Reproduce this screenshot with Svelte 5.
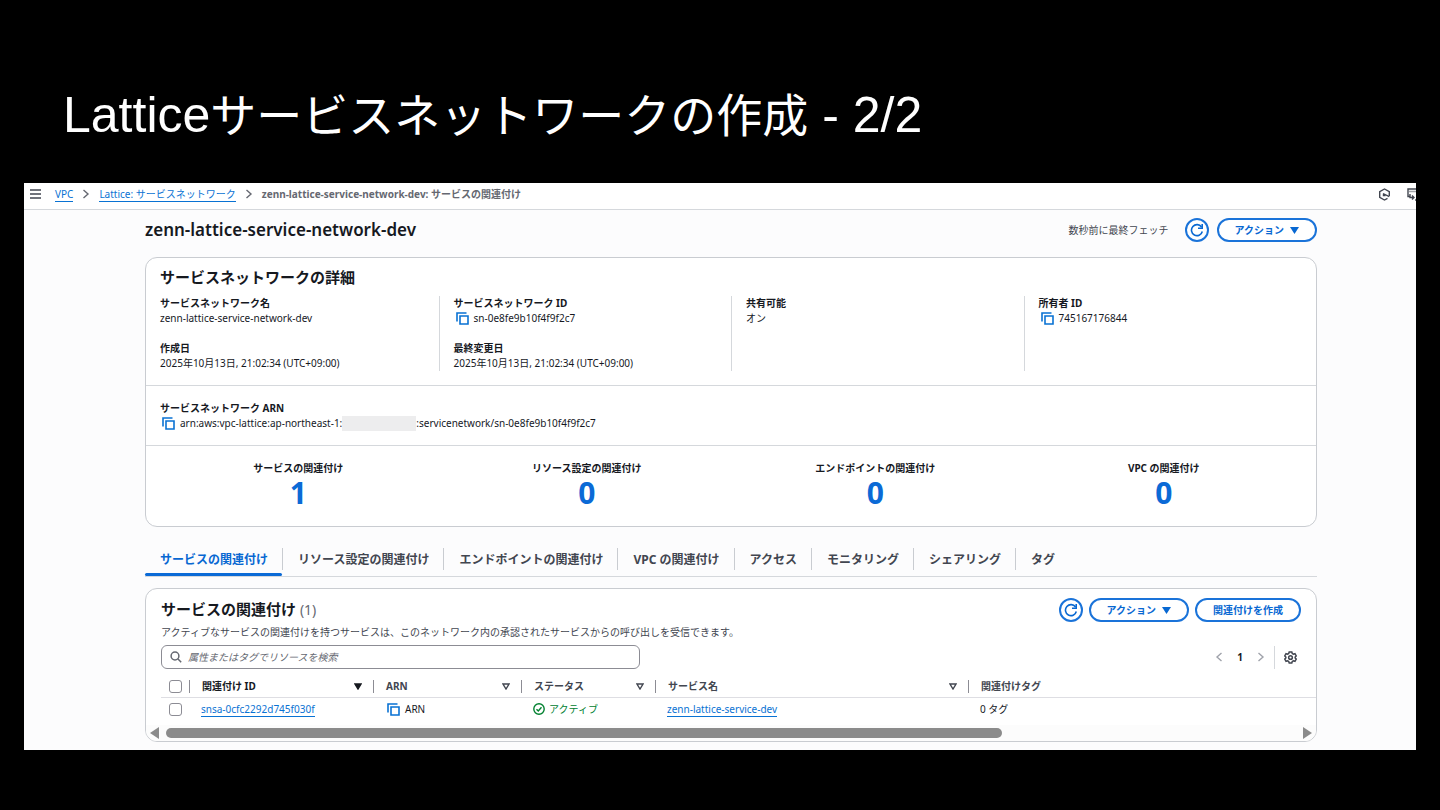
<script>
	const crumbs = [
		{ label: 'VPC', href: '#vpc' },
		{ label: 'Lattice: サービスネットワーク', href: '#lattice' }
	];

	const details = [
		[
			{ label: 'サービスネットワーク名', value: 'zenn-lattice-service-network-dev' },
			{ label: '作成日', value: '2025年10月13日, 21:02:34 (UTC+09:00)' }
		],
		[
			{ label: 'サービスネットワーク ID', value: 'sn-0e8fe9b10f4f9f2c7', copy: true },
			{ label: '最終変更日', value: '2025年10月13日, 21:02:34 (UTC+09:00)' }
		],
		[{ label: '共有可能', value: 'オン' }],
		[{ label: '所有者 ID', value: '745167176844', copy: true }]
	];

	const stats = [
		{ label: 'サービスの関連付け', count: 1 },
		{ label: 'リソース設定の関連付け', count: 0 },
		{ label: 'エンドポイントの関連付け', count: 0 },
		{ label: 'VPC の関連付け', count: 0 }
	];

	const tabs = [
		'サービスの関連付け',
		'リソース設定の関連付け',
		'エンドポイントの関連付け',
		'VPC の関連付け',
		'アクセス',
		'モニタリング',
		'シェアリング',
		'タグ'
	];

	const columns = ['関連付け ID', 'ARN', 'ステータス', 'サービス名', '関連付けタグ'];

	let activeTab = $state(0);
	let sorted = $state(0);
	let query = $state('');
	let selected = $state(false);
</script>

{#snippet copyIcon()}
	<svg class="copy" viewBox="0 0 13 13" width="13" height="13" aria-hidden="true">
		<path d="M1 9.5V1h9.5" />
		<path d="M4 4h8v8H4z" />
	</svg>
{/snippet}

{#snippet refreshButton()}
	<button class="round" aria-label="更新">
		<svg viewBox="0 0 14 14" width="14" height="14" aria-hidden="true">
			<path d="M12.3 8.5A5.5 5.5 0 1 1 11.5 4" />
			<path d="M12.2 1v4.2H8" />
		</svg>
	</button>
{/snippet}

{#snippet chevron(dir)}
	<svg class="chevron" viewBox="0 0 8 10" width="8" height="10" aria-hidden="true">
		<path d={dir === 'left' ? 'M6.5 1L2 5l4.5 4' : 'M1.5 1L6 5l-4.5 4'} />
	</svg>
{/snippet}

{#snippet actionButton()}
	<button class="pill">
		アクション
		<svg viewBox="0 0 9 8" width="9" height="8" aria-hidden="true"><path d="M0 1h9L4.5 8z" /></svg>
	</button>
{/snippet}

<main class="slide">
	<h1>Lattice<span>サービスネットワークの作成</span> - 2/2</h1>

	<div class="console">
		<header class="topbar">
			<button class="plain menu" aria-label="メニュー">
				<svg viewBox="0 0 11 10" width="11" height="10"><path d="M0 1h11M0 5h11M0 9h11" /></svg>
			</button>
			<nav class="crumbs">
				{#each crumbs as crumb}
					<a href={crumb.href}>{crumb.label}</a>
					{@render chevron('right')}
				{/each}
				<b>zenn-lattice-service-network-dev: サービスの関連付け</b>
			</nav>
			<div class="tools">
				<button class="plain" aria-label="CloudShell">
					<svg viewBox="0 0 13 13" width="13" height="13">
						<path d="M11.3 8V3.7L6.5 1 1.7 3.7v5.6L6.5 12l3-1.7" />
						<path d="M5 5.5l6.3 3.2M5.5 6v1.5h2" />
					</svg>
				</button>
				<button class="plain" aria-label="ツール">
					<svg viewBox="0 0 9 13" width="9" height="13">
						<path d="M3 8.5H1V1h8" />
						<path d="M2.5 3.5h7" stroke-dasharray="1 1" />
						<path d="M3 6v3.5h4M5 7.5l2 2-2 2M9 11v2" />
					</svg>
				</button>
			</div>
		</header>

		<div class="page">
			<div class="title-row">
				<h2>zenn-lattice-service-network-dev</h2>
				<span class="fetched">数秒前に最終フェッチ</span>
				{@render refreshButton()}
				{@render actionButton()}
			</div>

			<section class="card">
				<h3>サービスネットワークの詳細</h3>
				<div class="details">
					{#each details as column}
						<dl>
							{#each column as item}
								<div>
									<dt>{item.label}</dt>
									<dd>{#if item.copy}{@render copyIcon()}{/if}{item.value}</dd>
								</div>
							{/each}
						</dl>
					{/each}
				</div>
				<dl class="arn">
					<div>
						<dt>サービスネットワーク ARN</dt>
						<dd>
							{@render copyIcon()}arn:aws:vpc-lattice:ap-northeast-1:<span class="mask"></span>:servicenetwork/sn-0e8fe9b10f4f9f2c7
						</dd>
					</div>
				</dl>
				<div class="stats">
					{#each stats as stat}
						<div>
							<p>{stat.label}</p>
							<strong>{stat.count}</strong>
						</div>
					{/each}
				</div>
			</section>

			<div class="tabs" role="tablist">
				{#each tabs as tab, i}
					<button
						role="tab"
						aria-selected={activeTab === i}
						class:active={activeTab === i}
						onclick={() => (activeTab = i)}
					>
						{tab}
					</button>
				{/each}
			</div>

			<section class="card">
				<div class="list-head">
					<h3>サービスの関連付け <span>(1)</span></h3>
					{@render refreshButton()}
					{@render actionButton()}
					<button class="pill">関連付けを作成</button>
				</div>
				<p class="desc">
					アクティブなサービスの関連付けを持つサービスは、このネットワーク内の承認されたサービスからの呼び出しを受信できます。
				</p>
				<div class="filter-row">
					<label class="search">
						<svg viewBox="0 0 12 12" width="12" height="12" aria-hidden="true">
							<circle cx="5" cy="5" r="3.9" />
							<path d="M8 8l3.2 3.2" />
						</svg>
						<input
							type="text"
							aria-label="検索"
							placeholder="属性またはタグでリソースを検索"
							bind:value={query}
						/>
					</label>
					<div class="pager">
						<button class="plain" aria-label="前へ">{@render chevron('left')}</button>
						<b>1</b>
						<button class="plain" aria-label="次へ">{@render chevron('right')}</button>
						<button class="plain gear" aria-label="設定">
							<svg viewBox="0 0 14 14" width="13" height="13">
								<path
									d="M5.6 1h2.8l.5 1.7 1.2.7 1.7-.5 1.4 2.4L12 6.5v1l1.2 1.2-1.4 2.4-1.7-.5-1.2.7L8.4 13H5.6l-.5-1.7-1.2-.7-1.7.5L.8 8.7 2 7.5v-1L.8 5.3l1.4-2.4 1.7.5 1.2-.7z"
								/>
								<circle cx="7" cy="7" r="2" />
							</svg>
						</button>
					</div>
				</div>

				<table>
					<colgroup>
						<col class="c-check" />
						<col class="c-id" />
						<col class="c-arn" />
						<col class="c-status" />
						<col class="c-service" />
						<col />
					</colgroup>
					<thead>
						<tr>
							<th><input type="checkbox" aria-label="すべて選択" bind:checked={selected} /></th>
							{#each columns as column, i}
								<th>
									<button class="sort" class:sorted={sorted === i} onclick={() => (sorted = i)}>
										{column}
										{#if i < columns.length - 1}
											<svg viewBox="0 0 8 7" width="8" height="7" aria-hidden="true">
												<path d="M1 1h6L4 6z" />
											</svg>
										{/if}
									</button>
								</th>
							{/each}
						</tr>
					</thead>
					<tbody>
						<tr>
							<td><input type="checkbox" aria-label="行を選択" bind:checked={selected} /></td>
							<td><a href="#snsa">snsa-0cfc2292d745f030f</a></td>
							<td><span class="cell">{@render copyIcon()}ARN</span></td>
							<td>
								<span class="cell ok">
									<svg viewBox="0 0 12 12" width="12" height="12" aria-hidden="true">
										<circle cx="6" cy="6" r="5.2" />
										<path d="M3.5 6.2l1.8 1.8 3.2-3.7" />
									</svg>
									アクティブ
								</span>
							</td>
							<td><a href="#service">zenn-lattice-service-dev</a></td>
							<td>0 タグ</td>
						</tr>
					</tbody>
				</table>

				<div class="scrollbar">
					<svg viewBox="0 0 9 12" width="9" height="12" aria-hidden="true"><path d="M9 0v12L0 6z" /></svg>
					<div class="track"><div class="thumb"></div></div>
					<svg viewBox="0 0 9 12" width="9" height="12" aria-hidden="true"><path d="M0 0v12l9-6z" /></svg>
				</div>
			</section>
		</div>
	</div>
</main>

<style>
	:global(body) {
		background: #000;
	}

	.slide {
		min-height: 100vh;
		box-sizing: border-box;
		padding: 80px 24px 60px;
		background: #000;
		font-family: 'Noto Sans', 'Noto Sans CJK JP', sans-serif;
		font-size: 10px;
		line-height: 15px;
		color: #16191f;
	}

	h1,
	h2,
	h3,
	p,
	dl,
	dd {
		margin: 0;
	}

	h1 {
		margin-bottom: 33px;
		padding-left: 39px;
		font: 400 50px/70px 'Liberation Sans', 'Noto Sans CJK JP', sans-serif;
		color: #fff;
	}

	h1 span {
		font-size: 46px;
		line-height: 1;
	}

	button,
	input {
		font: inherit;
		color: inherit;
		margin: 0;
	}

	button {
		padding: 0;
		cursor: pointer;
	}

	svg {
		flex: none;
		fill: none;
		stroke: currentColor;
	}

	a {
		color: #0972d3;
		text-decoration: none;
		border-bottom: 1px solid #0972d3;
	}

	.plain {
		display: flex;
		border: 0;
		background: none;
	}

	.console {
		background: #fcfcfd;
		overflow: hidden;
	}

	.topbar {
		display: flex;
		align-items: center;
		height: 22px;
		padding: 0 0 4px 6px;
		background: #fff;
		border-bottom: 1px solid #d5d8dc;
		color: #424650;
	}

	.menu svg {
		stroke-width: 1.5;
	}

	.crumbs {
		display: flex;
		align-items: center;
		gap: 9px;
		margin-left: 14px;
		color: #656871;
	}

	.crumbs a {
		line-height: 14px;
	}

	.chevron {
		stroke-width: 1.4;
	}

	.tools {
		display: flex;
		gap: 16px;
		margin-left: auto;
	}

	.tools svg {
		stroke-width: 1.4;
	}

	.page {
		padding: 8px 99px 8px 121px;
	}

	.title-row {
		display: flex;
		align-items: center;
		gap: 8px;
		margin-bottom: 15px;
	}

	h2 {
		flex: 1;
		font-size: 17px;
		font-weight: 600;
		line-height: 24px;
	}

	.fetched {
		margin-right: 8px;
		color: #424650;
	}

	.round,
	.pill {
		display: flex;
		align-items: center;
		justify-content: center;
		gap: 6px;
		box-sizing: border-box;
		height: 24px;
		border: 2px solid #1a73d9;
		border-radius: 12px;
		background: #fff;
		color: #0868d2;
		font-weight: 700;
	}

	.round {
		width: 24px;
	}

	.round svg {
		stroke-width: 1.6;
	}

	.pill {
		padding: 0 16px;
	}

	.pill svg {
		fill: currentColor;
		stroke: none;
	}

	.card {
		border: 1px solid #c9ccd1;
		border-radius: 12px;
		background: #fff;
		overflow: hidden;
	}

	.card h3 {
		padding: 9px 14px;
		font-size: 15px;
		line-height: 20px;
	}

	.details {
		display: grid;
		grid-template-columns: repeat(4, 1fr);
		padding-bottom: 14px;
	}

	.details dl {
		display: flex;
		flex-direction: column;
		gap: 15px;
		padding-left: 14px;
	}

	.details dl + dl {
		border-left: 1px solid #d5d8dc;
	}

	dt,
	.stats p {
		font-weight: 700;
	}

	dd,
	.cell {
		display: flex;
		align-items: center;
	}

	.copy {
		margin: 0 5px 0 2px;
		color: #0972d3;
		stroke-width: 1.6;
	}

	.arn {
		padding: 15px 14px 14px;
		border-top: 1px solid #d5d8dc;
	}

	.mask {
		width: 74px;
		height: 15px;
		background: #ededee;
	}

	.stats {
		display: grid;
		grid-template-columns: repeat(4, 1fr);
		padding: 15px 8px 16px;
		border-top: 1px solid #d5d8dc;
		text-align: center;
	}

	.stats strong {
		display: block;
		font-size: 30px;
		line-height: 34px;
		color: #0b6ad6;
	}

	.tabs {
		display: flex;
		margin-bottom: 11px;
		padding: 21px 0 6px;
		border-bottom: 1px solid #d5d8dc;
	}

	.tabs button {
		position: relative;
		height: 22px;
		padding: 0 14px 0 15px;
		border: 0;
		background: none;
		font-size: 12px;
		font-weight: 700;
		color: #424650;
	}

	.tabs button + button {
		border-left: 1px solid #c9ccd1;
	}

	.tabs .active {
		color: #0868d2;
	}

	.tabs .active::after {
		content: '';
		position: absolute;
		left: 0;
		right: 0;
		bottom: -6px;
		height: 3px;
		border-radius: 2px;
		background: #0b6ad6;
	}

	.list-head {
		display: flex;
		align-items: center;
		gap: 6px;
		padding: 9px 15px 0;
	}

	.list-head h3 {
		flex: 1;
		padding: 0 0 2px;
	}

	.list-head h3 span {
		font-size: 14px;
		font-weight: 400;
		line-height: 1;
		color: #656871;
	}

	.desc {
		padding: 3px 15px 5px;
		color: #424650;
	}

	.filter-row {
		display: flex;
		align-items: center;
		justify-content: space-between;
		padding: 0 15px 6px;
	}

	.search {
		display: flex;
		align-items: center;
		gap: 6px;
		box-sizing: border-box;
		width: 42%;
		height: 24px;
		padding: 0 8px;
		border: 1px solid #8c8c94;
		border-radius: 6px;
		color: #656871;
	}

	.search svg {
		stroke-width: 1.5;
	}

	.search input {
		flex: 1;
		padding: 0;
		border: 0;
		outline: 0;
		background: none;
	}

	.search input::placeholder {
		color: #656871;
		font-style: italic;
	}

	.pager {
		display: flex;
		align-items: center;
		gap: 14px;
	}

	.pager .chevron {
		color: #a0a3ab;
	}

	.gear {
		margin-left: -5px;
		padding: 5px 4px 5px 9px;
		border-left: 1px solid #d5d8dc;
		color: #424650;
	}

	.gear svg {
		stroke-width: 1.6;
	}

	table {
		width: calc(100% - 15px);
		margin-left: 15px;
		border-collapse: collapse;
		table-layout: fixed;
	}

	.c-check {
		width: 28px;
	}

	.c-id {
		width: 184px;
	}

	.c-arn {
		width: 148px;
	}

	.c-status {
		width: 134px;
	}

	.c-service {
		width: 313px;
	}

	th,
	td {
		height: 22px;
		padding: 0 0 0 12px;
		text-align: left;
	}

	th {
		padding: 0;
		border-bottom: 1px solid #dedee3;
	}

	th:first-child,
	td:first-child {
		padding: 0;
		text-align: center;
	}

	.sort {
		display: flex;
		align-items: center;
		justify-content: space-between;
		width: 100%;
		height: 13px;
		padding: 0 11px 0 12px;
		border: 0;
		border-left: 1px solid #8c8c94;
		background: none;
		font-weight: 700;
		color: #424650;
	}

	.sort svg {
		stroke-width: 1.4;
	}

	.sorted {
		color: #16191f;
	}

	.sorted svg {
		fill: currentColor;
	}

	input[type='checkbox'] {
		appearance: none;
		display: block;
		width: 13px;
		height: 13px;
		margin: 0 auto;
		border: 1px solid #8c8c94;
		border-radius: 3px;
		background: #fff;
	}

	input[type='checkbox']:checked {
		background: #0972d3;
	}

	.ok {
		gap: 4px;
		color: #00802f;
	}

	.ok svg {
		stroke-width: 1.4;
	}

	.scrollbar {
		display: flex;
		align-items: center;
		gap: 7px;
		height: 15px;
		margin-top: 5px;
		padding: 0 4px 1px;
		background: #fcfcfc;
		color: #8b8b8b;
	}

	.scrollbar svg {
		fill: currentColor;
		stroke: none;
	}

	.track {
		flex: 1;
	}

	.thumb {
		width: 74%;
		height: 10px;
		border-radius: 5px;
		background: #8b8b8b;
	}
</style>
